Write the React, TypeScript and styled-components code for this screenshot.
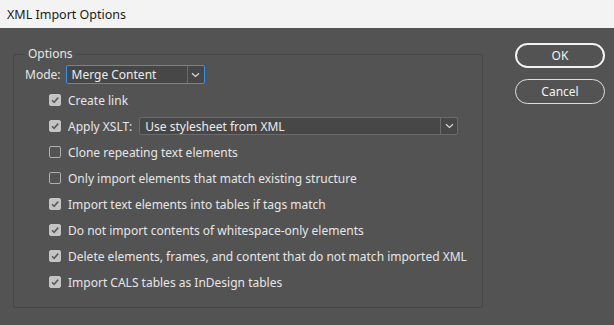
import React from "react";
import styled, { createGlobalStyle } from "styled-components";

const Global = createGlobalStyle`
  html, body { margin: 0; padding: 0; background: #535353; }
  body { font-family: "Noto Sans", "Open Sans", sans-serif; font-size: 12px; color: #e6e6e6; }
  * { box-sizing: border-box; }
`;

const Window = styled.div`
  width: 614px;
  height: 325px;
  display: flex;
  flex-direction: column;
  background: #535353;
  overflow: hidden;
`;

const TitleBar = styled.div`
  height: 28px;
  flex: none;
  background: #f3f3f3;
  color: #1a1a1a;
  display: flex;
  align-items: center;
  padding-left: 7px;
  font-size: 12.5px;
`;

const Body = styled.div`
  display: flex;
  align-items: flex-start;
  padding: 19px 0 0 13px;
  gap: 32px;
`;

const Group = styled.fieldset`
  width: 470px;
  height: 261px;
  margin: 0;
  padding: 4px 11px 0 11px;
  border: 1px solid #474747;
  border-radius: 2px;
`;

const Legend = styled.legend`
  padding: 0 3px;
  line-height: 14px;
  color: #e6e6e6;
`;

const ModeRow = styled.div`
  display: flex;
  align-items: center;
  gap: 5px;
  height: 19px;
  margin-bottom: 3px;
`;

const Select = styled.div<{ $focused?: boolean; $width: number }>`
  width: ${(p) => p.$width}px;
  height: ${(p) => (p.$focused ? 19 : 18)}px;
  display: flex;
  align-items: stretch;
  background: #474747;
  border: 1px solid ${(p) => (p.$focused ? "#3591ee" : "#6b6b6b")};
  border-radius: 2px;
  color: #ececec;
`;

const SelectText = styled.div`
  flex: 1;
  display: flex;
  align-items: center;
  padding-left: 5px;
  white-space: nowrap;
`;

const Arrow = styled.div`
  width: 17px;
  flex: none;
  border-left: 1px solid #6a6a6a;
  display: flex;
  align-items: center;
  justify-content: center;
`;

const List = styled.div`
  display: flex;
  flex-direction: column;
  padding-left: 24px;
`;

const Row = styled.div`
  height: 26px;
  display: flex;
  align-items: center;
  gap: 7px;
  white-space: nowrap;
`;

const Box = styled.span<{ $checked: boolean }>`
  width: 12px;
  height: 12px;
  flex: none;
  border-radius: 2px;
  display: flex;
  align-items: center;
  justify-content: center;
  background: ${(p) => (p.$checked ? "#c4c4c4" : "transparent")};
  border: 1px solid ${(p) => (p.$checked ? "#c4c4c4" : "#b0b0b0")};
`;

const Buttons = styled.div`
  display: flex;
  flex-direction: column;
  gap: 11px;
  margin-top: -4px;
`;

const Button = styled.button<{ $default?: boolean }>`
  width: 90px;
  height: 25px;
  border-radius: 13px;
  background: transparent;
  border: ${(p) => (p.$default ? "2px solid #f2f2f2" : "1px solid #dedede")};
  color: #f2f2f2;
  font-family: inherit;
  font-size: 12px;
  padding: 0;
`;

const Chevron = () => (
  <svg width="9" height="6" viewBox="0 0 9 6">
    <path d="M1 1.2 L4.5 4.5 L8 1.2" fill="none" stroke="#d8d8d8" strokeWidth="1.2" />
  </svg>
);

const Check = () => (
  <svg width="10" height="10" viewBox="0 0 10 10">
    <path d="M2 5.2 L4.1 7.3 L8.2 2.6" fill="none" stroke="#5c5c5c" strokeWidth="1.6" />
  </svg>
);

const CheckBox = ({ checked }: { checked: boolean }) => (
  <Box $checked={checked}>{checked && <Check />}</Box>
);

const items: [string, boolean][] = [
  ["Clone repeating text elements", false],
  ["Only import elements that match existing structure", false],
  ["Import text elements into tables if tags match", true],
  ["Do not import contents of whitespace-only elements", true],
  ["Delete elements, frames, and content that do not match imported XML", true],
  ["Import CALS tables as InDesign tables", true],
];

export default function App() {
  return (
    <Window>
      <Global />
      <TitleBar>XML Import Options</TitleBar>
      <Body>
        <Group>
          <Legend>Options</Legend>
          <ModeRow>
            <span>Mode:</span>
            <Select $focused $width={139}>
              <SelectText>Merge Content</SelectText>
              <Arrow>
                <Chevron />
              </Arrow>
            </Select>
          </ModeRow>
          <List>
            <Row>
              <CheckBox checked />
              <span>Create link</span>
            </Row>
            <Row>
              <CheckBox checked />
              <span>Apply XSLT:</span>
              <Select $width={319}>
                <SelectText>Use stylesheet from XML</SelectText>
                <Arrow>
                  <Chevron />
                </Arrow>
              </Select>
            </Row>
            {items.map(([label, checked]) => (
              <Row key={label}>
                <CheckBox checked={checked} />
                <span>{label}</span>
              </Row>
            ))}
          </List>
        </Group>
        <Buttons>
          <Button $default>OK</Button>
          <Button>Cancel</Button>
        </Buttons>
      </Body>
    </Window>
  );
}
